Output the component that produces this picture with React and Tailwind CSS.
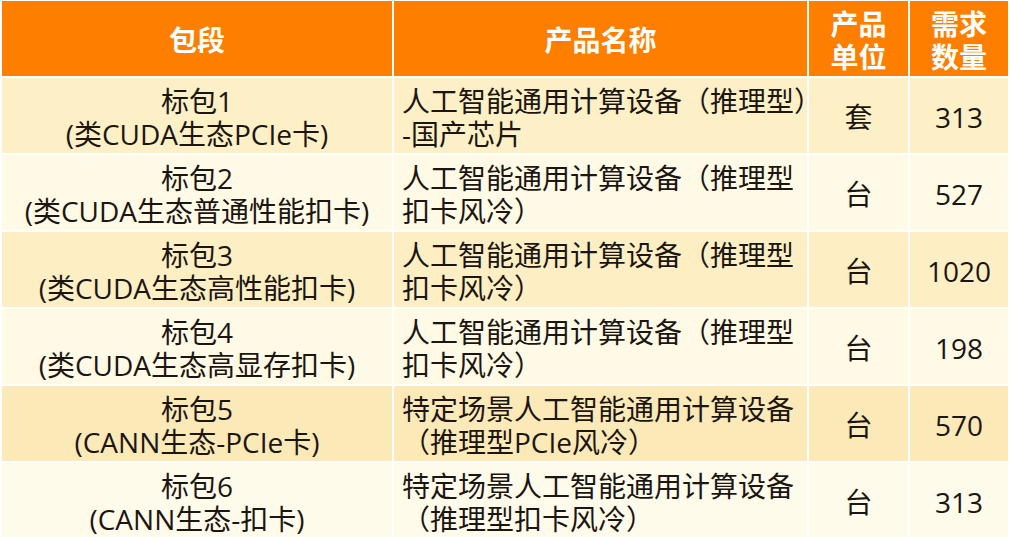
const rows = [
  {
    pkg: ["标包1", "(类CUDA生态PCIe卡)"],
    name: ["人工智能通用计算设备（推理型）", "-国产芯片"],
    unit: "套",
    qty: "313",
  },
  {
    pkg: ["标包2", "(类CUDA生态普通性能扣卡)"],
    name: ["人工智能通用计算设备（推理型", "扣卡风冷）"],
    unit: "台",
    qty: "527",
  },
  {
    pkg: ["标包3", "(类CUDA生态高性能扣卡)"],
    name: ["人工智能通用计算设备（推理型", "扣卡风冷）"],
    unit: "台",
    qty: "1020",
  },
  {
    pkg: ["标包4", "(类CUDA生态高显存扣卡)"],
    name: ["人工智能通用计算设备（推理型", "扣卡风冷）"],
    unit: "台",
    qty: "198",
  },
  {
    pkg: ["标包5", "(CANN生态-PCIe卡)"],
    name: ["特定场景人工智能通用计算设备", "（推理型PCIe风冷）"],
    unit: "台",
    qty: "570",
  },
  {
    pkg: ["标包6", "(CANN生态-扣卡)"],
    name: ["特定场景人工智能通用计算设备", "（推理型扣卡风冷）"],
    unit: "台",
    qty: "313",
  },
];

const rowBg = [
  "bg-[#fdf0c6]",
  "bg-[#fffae5]",
  "bg-[#fdefc3]",
  "bg-[#fffae6]",
  "bg-[#fce9b8]",
  "bg-[#fffbea]",
];

export default function App() {
  return (
    <div
      className="w-[1010px] h-[537px] overflow-hidden bg-white pl-[2px] pt-[1px]"
      style={{ fontFamily: '"Open Sans", "Noto Sans CJK SC", sans-serif' }}
    >
      <div className="grid grid-cols-[390px_413px_99px_98px] auto-rows-[75px] gap-[2px] text-[28px] leading-[33px] text-[#1c1612]">
        {/* header */}
        <div className="bg-[#fe7f00] text-white font-bold flex items-center justify-center pt-[4px]">
          包段
        </div>
        <div className="bg-[#fe7f00] text-white font-bold flex items-center justify-center pt-[4px]">
          产品名称
        </div>
        <div className="bg-[#fe7f00] text-white font-bold flex flex-col items-center justify-center pt-[4px]">
          <span>产品</span>
          <span>单位</span>
        </div>
        <div className="bg-[#fe7f00] text-white font-bold flex flex-col items-center justify-center pt-[4px]">
          <span>需求</span>
          <span>数量</span>
        </div>

        {rows.map((r, i) => (
          <Row key={i} row={r} bg={rowBg[i]} />
        ))}
      </div>
    </div>
  );
}

function Row({ row, bg }) {
  return (
    <>
      <div className={`${bg} flex flex-col items-center justify-center pt-[4px] whitespace-nowrap`}>
        <span>{row.pkg[0]}</span>
        <span>{row.pkg[1]}</span>
      </div>
      <div className={`${bg} flex flex-col justify-center pl-[8px] pt-[4px] whitespace-nowrap`}>
        <span>{row.name[0]}</span>
        <span>{row.name[1]}</span>
      </div>
      <div className={`${bg} flex items-center justify-center pt-[4px]`}>{row.unit}</div>
      <div className={`${bg} flex items-center justify-center pt-[4px]`}>{row.qty}</div>
    </>
  );
}
